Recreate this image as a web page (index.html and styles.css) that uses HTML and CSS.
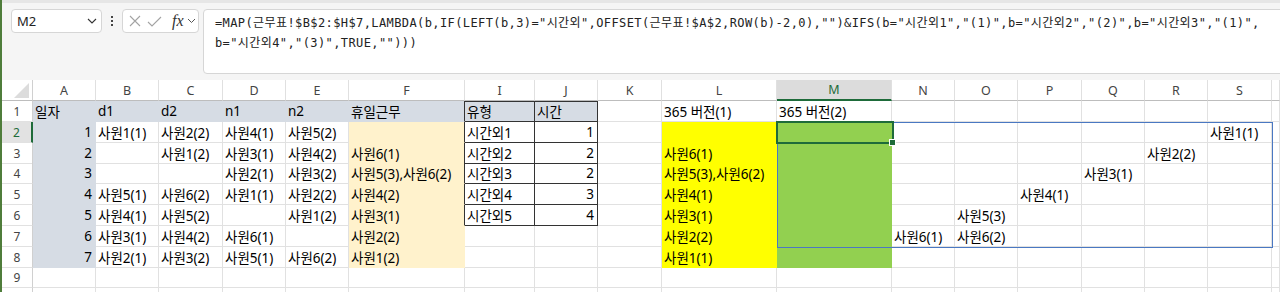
FILE: index.html
```html
<!DOCTYPE html>
<html>

<head>
  <meta charset="utf-8" />
  <title>근무표</title>
  <link rel="stylesheet" href="styles.css">
</head>

<body>
  <div class="bar">
    <div class="box namebox">
      <span>M2</span>
      <svg width="10" height="6" viewBox="0 0 10 6"><polyline points="1,1 5,5 9,1" fill="none" stroke="#333" stroke-width="1.1" /></svg>
    </div>
    <div class="dots"><i></i><i></i><i></i></div>
    <div class="box tools">
      <svg width="12" height="12" viewBox="0 0 12 12"><path d="M1 1L11 11M11 1L1 11" stroke="#a3a3a3" stroke-width="1.1" /></svg>
      <svg width="15" height="11" viewBox="0 0 15 11"><polyline points="1,6 5,10 14,1" fill="none" stroke="#a3a3a3" stroke-width="1.1" /></svg>
      <span class="fx">fx</span>
      <svg width="9" height="6" viewBox="0 0 9 6"><polyline points="1,1 4.5,4.5 8,1" fill="none" stroke="#555" stroke-width="1" /></svg>
    </div>
    <div class="box formula">=MAP(근무표!$B$2:$H$7,LAMBDA(b,IF(LEFT(b,3)="시간외",OFFSET(근무표!$A$2,ROW(b)-2,0),"")&amp;IFS(b="시간외1","(1)",b="시간외2","(2)",b="시간외3","(1)",<br />b="시간외4","(3)",TRUE,"")))</div>
  </div>

  <div class="sheet">
    <div class="row colhead">
      <div class="corner"><svg width="16" height="16" viewBox="0 0 16 16"><polygon points="15,0 15,15 0,15" fill="#dcdcdc" /></svg></div>
      <div>A</div><div>B</div><div>C</div><div>D</div><div>E</div><div>F</div><div>I</div><div>J</div><div>K</div><div>L</div>
      <div class="on">M</div>
      <div>N</div><div>O</div><div>P</div><div>Q</div><div>R</div><div>S</div><div></div>
    </div>

    <div class="row">
      <div class="rh">1</div>
      <div class="c blue">일자</div><div class="c blue">d1</div><div class="c blue">d2</div><div class="c blue">n1</div><div class="c blue">n2</div>
      <div class="c blue tl">휴일근무</div>
      <div class="c blue tb tt">유형</div><div class="c blue tb tt">시간</div>
      <div class="c"></div><div class="c">365 버전(1)</div><div class="c">365 버전(2)</div>
      <div class="c"></div><div class="c"></div><div class="c"></div><div class="c"></div><div class="c"></div><div class="c"></div><div class="c"></div>
    </div>

    <div class="row">
      <div class="rh on">2</div>
      <div class="c blue n">1</div><div class="c">사원1(1)</div><div class="c">사원2(2)</div><div class="c">사원4(1)</div><div class="c">사원5(2)</div>
      <div class="c orange tl"></div>
      <div class="c tb">시간외1</div><div class="c tb n">1</div>
      <div class="c"></div><div class="c yellow"></div><div class="c green"></div>
      <div class="c"></div><div class="c"></div><div class="c"></div><div class="c"></div><div class="c"></div><div class="c">사원1(1)</div><div class="c"></div>
    </div>

    <div class="row short">
      <div class="rh">3</div>
      <div class="c blue n">2</div><div class="c"></div><div class="c">사원1(2)</div><div class="c">사원3(1)</div><div class="c">사원4(2)</div>
      <div class="c orange tl">사원6(1)</div>
      <div class="c tb">시간외2</div><div class="c tb n">2</div>
      <div class="c"></div><div class="c yellow">사원6(1)</div><div class="c green"></div>
      <div class="c"></div><div class="c"></div><div class="c"></div><div class="c"></div><div class="c">사원2(2)</div><div class="c"></div><div class="c"></div>
    </div>

    <div class="row">
      <div class="rh">4</div>
      <div class="c blue n">3</div><div class="c"></div><div class="c"></div><div class="c">사원2(1)</div><div class="c">사원3(2)</div>
      <div class="c orange tl">사원5(3),사원6(2)</div>
      <div class="c tb">시간외3</div><div class="c tb n">2</div>
      <div class="c"></div><div class="c yellow">사원5(3),사원6(2)</div><div class="c green"></div>
      <div class="c"></div><div class="c"></div><div class="c"></div><div class="c">사원3(1)</div><div class="c"></div><div class="c"></div><div class="c"></div>
    </div>

    <div class="row">
      <div class="rh">5</div>
      <div class="c blue n">4</div><div class="c">사원5(1)</div><div class="c">사원6(2)</div><div class="c">사원1(1)</div><div class="c">사원2(2)</div>
      <div class="c orange tl">사원4(2)</div>
      <div class="c tb">시간외4</div><div class="c tb n">3</div>
      <div class="c"></div><div class="c yellow">사원4(1)</div><div class="c green"></div>
      <div class="c"></div><div class="c"></div><div class="c">사원4(1)</div><div class="c"></div><div class="c"></div><div class="c"></div><div class="c"></div>
    </div>

    <div class="row">
      <div class="rh">6</div>
      <div class="c blue n">5</div><div class="c">사원4(1)</div><div class="c">사원5(2)</div><div class="c"></div><div class="c">사원1(2)</div>
      <div class="c orange tl">사원3(1)</div>
      <div class="c tb">시간외5</div><div class="c tb n">4</div>
      <div class="c"></div><div class="c yellow">사원3(1)</div><div class="c green"></div>
      <div class="c"></div><div class="c">사원5(3)</div><div class="c"></div><div class="c"></div><div class="c"></div><div class="c"></div><div class="c"></div>
    </div>

    <div class="row">
      <div class="rh">7</div>
      <div class="c blue n">6</div><div class="c">사원3(1)</div><div class="c">사원4(2)</div><div class="c">사원6(1)</div><div class="c"></div>
      <div class="c orange">사원2(2)</div>
      <div class="c"></div><div class="c"></div>
      <div class="c"></div><div class="c yellow">사원2(2)</div><div class="c green"></div>
      <div class="c">사원6(1)</div><div class="c">사원6(2)</div><div class="c"></div><div class="c"></div><div class="c"></div><div class="c"></div><div class="c"></div>
    </div>

    <div class="row">
      <div class="rh">8</div>
      <div class="c blue n">7</div><div class="c">사원2(1)</div><div class="c">사원3(2)</div><div class="c">사원5(1)</div><div class="c">사원6(2)</div>
      <div class="c orange">사원1(2)</div>
      <div class="c"></div><div class="c"></div>
      <div class="c"></div><div class="c yellow">사원1(1)</div><div class="c green"></div>
      <div class="c"></div><div class="c"></div><div class="c"></div><div class="c"></div><div class="c"></div><div class="c"></div><div class="c"></div>
    </div>

    <div class="row short">
      <div class="rh">9</div>
      <div class="c"></div><div class="c"></div><div class="c"></div><div class="c"></div><div class="c"></div><div class="c"></div><div class="c"></div><div class="c"></div><div class="c"></div>
      <div class="c"></div><div class="c"></div><div class="c"></div><div class="c"></div><div class="c"></div><div class="c"></div><div class="c"></div><div class="c"></div><div class="c"></div>
    </div>

    <!-- row 10 only peeks in at the bottom edge -->
    <div class="row">
      <div class="rh"></div>
      <div class="c"></div><div class="c"></div><div class="c"></div><div class="c"></div><div class="c"></div><div class="c"></div><div class="c"></div><div class="c"></div><div class="c"></div>
      <div class="c"></div><div class="c"></div><div class="c"></div><div class="c"></div><div class="c"></div><div class="c"></div><div class="c"></div><div class="c"></div><div class="c"></div>
    </div>

    <!-- spill range + active cell -->
    <div class="spill"></div>
    <div class="active"></div>
    <div class="handle"></div>
  </div>
</body>

</html>
```

FILE: styles.css
```css
html,
body {
  margin: 0;
}

body {
  height: 292px;
  overflow: hidden;
  background-color: #fff;
  border-left: 2px solid #4f7d3b;
  font-family: "Noto Sans", "Noto Sans CJK KR", sans-serif;
  color: #000;
}

/* formula bar */
.bar {
  height: 80px;
  box-sizing: border-box;
  border-top: 3px solid #e6e6e6;
  background-color: #f5f5f5;
  display: flex;
  align-items: flex-start;
  padding: 6px 0 0 9px;
}

.bar > * {
  flex-shrink: 0;
}

.box {
  background-color: #fff;
  border: 1px solid #d6d6d6;
  border-radius: 4px;
  box-sizing: border-box;
}

.namebox {
  width: 91px;
  height: 24px;
  display: flex;
  align-items: center;
  justify-content: space-between;
  padding: 0 4px 0 5px;
  font-size: 13px;
  color: #222;
}

.dots {
  width: 20px;
  height: 24px;
  display: flex;
  flex-direction: column;
  align-items: center;
  justify-content: center;
  gap: 2px;
}

.dots i {
  width: 2px;
  height: 2px;
  background-color: #444;
}

.tools {
  width: 77px;
  height: 24px;
  display: flex;
  align-items: center;
  gap: 6px;
  padding-left: 6px;
}

.fx {
  font-family: "Liberation Serif", serif;
  font-style: italic;
  font-size: 16px;
  color: #333;
  margin-left: 4px;
  margin-right: -3px;
}

.formula {
  width: 1100px;
  height: 65px;
  margin-left: 4px;
  padding: 3px 0 0 11px;
  font-family: "DejaVu Sans Mono", "Noto Sans CJK KR", monospace;
  font-size: 12px;
  letter-spacing: 0.4px;
  line-height: 20px;
  white-space: nowrap;
  color: #222;
}

/* sheet */
.sheet {
  position: relative;
}

.row {
  display: grid;
  grid-template-columns: 31px 63px 63px 64px 63px 63px 116px 70px 63px 64px 115px 115px 63px 63px 64px 63px 63px 64px 1fr;
  height: 21px;
}

.row.short {
  height: 20px;
}

.colhead div {
  box-sizing: border-box;
  border-right: 1px solid #e0e0e0;
  border-bottom: 1px solid #bdbdbd;
  font-size: 12.5px;
  color: #444;
  display: flex;
  align-items: center;
  justify-content: center;
}

.colhead .corner {
  justify-content: flex-end;
  align-items: flex-end;
  padding: 0 2px 1px 0;
  border-right-color: #d0d0d0;
}

.colhead .on {
  background-color: #dcdcdc;
  color: #1e6b3a;
  border-bottom: 2px solid #1e6b3a;
}

.rh {
  box-sizing: border-box;
  border-right: 1px solid #d0d0d0;
  border-bottom: 1px solid #e1e1e1;
  font-size: 12px;
  color: #444;
  display: flex;
  align-items: center;
  justify-content: center;
}

.rh.on {
  background-color: #e2e2e2;
  color: #1e6b3a;
  border-right: 2px solid #1e6b3a;
}

.c {
  box-sizing: border-box;
  border-right: 1px solid #e1e1e1;
  border-bottom: 1px solid #e1e1e1;
  padding: 0 2px;
  font-size: 13.5px;
  white-space: nowrap;
  display: flex;
  align-items: center;
}

.c.n {
  justify-content: flex-end;
  padding-right: 3px;
}

.blue,
.orange,
.yellow,
.green {
  border-color: transparent;
}

.blue {
  background-color: #d6dce4;
}

.orange {
  background-color: #fff2cc;
}

.yellow {
  background-color: #ffff00;
}

.green {
  background-color: #92d050;
}

.tb {
  border-right-color: #333;
  border-bottom-color: #333;
}

.tl {
  border-right-color: #333;
}

.tt {
  box-shadow: inset 0 1px 0 #333;
}

.spill {
  position: absolute;
  left: 775px;
  top: 42px;
  width: 496px;
  height: 126px;
  box-sizing: border-box;
  border: 1px solid #4a78c2;
}

.active {
  position: absolute;
  left: 774px;
  top: 41px;
  width: 118px;
  height: 23px;
  box-sizing: border-box;
  border: 2px solid #1e6b3a;
}

.handle {
  position: absolute;
  left: 887px;
  top: 59px;
  width: 5px;
  height: 5px;
  background-color: #1e6b3a;
  border: 1px solid #fff;
}
```
